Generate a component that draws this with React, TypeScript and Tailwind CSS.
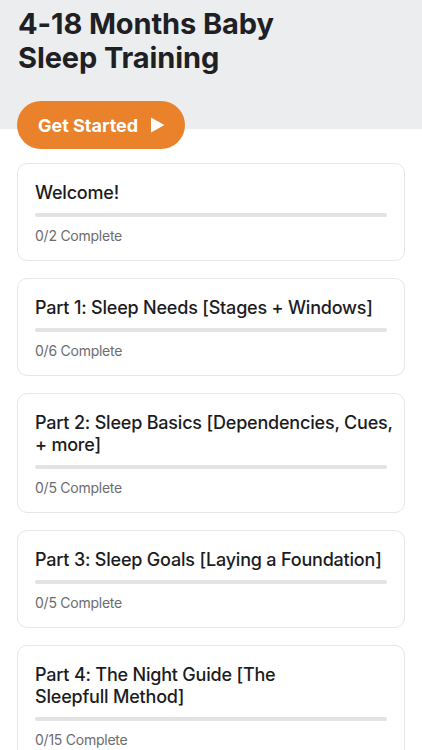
import React from "react";

const parts = [
  { title: "Welcome!", total: 2 },
  { title: "Part 1: Sleep Needs [Stages + Windows]", total: 6 },
  { title: "Part 2: Sleep Basics [Dependencies, Cues, + more]", total: 5 },
  { title: "Part 3: Sleep Goals [Laying a Foundation]", total: 5 },
  { title: "Part 4: The Night Guide [The Sleepfull\u00a0Method]", total: 15 },
];

export default function App() {
  return (
    <div
      className="min-h-[750px] w-[422px] overflow-hidden bg-white"
      style={{ fontFamily: "Inter, 'Noto Sans', sans-serif" }}
    >
      <div className="bg-[#ecedef] px-[18px] pt-[7px] pb-[54px]">
        <h1 className="text-[29px] font-bold leading-[34px] tracking-[-0.1px] text-[#1e2024]">
          4-18 Months Baby
          <br />
          Sleep Training
        </h1>
      </div>
      <div className="px-[17px]">
        <button className="-mt-[28px] flex h-[48px] w-[168px] items-center gap-[12px] rounded-full bg-[#e9822a] pl-[21px] text-[18px] font-bold text-white">
          <span>Get Started</span>
          <svg width="15" height="16" viewBox="0 0 15 16">
            <path d="M1 0.5 L14.5 8 L1 15.5 Z" fill="white" />
          </svg>
        </button>
        <div className="mt-[14px] flex flex-col gap-[17px] pb-6">
          {parts.map((p) => (
            <div
              key={p.title}
              className="rounded-[10px] border border-[#e6e6e8] bg-white pl-[17px] pr-[7px] pt-[18px] pb-[14px]"
            >
              <div className="text-[18px] font-medium leading-[22px] tracking-[-0.2px] text-[#1c1c1e]">
                {p.title}
              </div>
              <div className="mt-[9px] mr-[10px] h-[4px] rounded-full bg-[#e3e3e6]" />
              <div className="mt-[9px] text-[14px] leading-[20px] tracking-[-0.25px] text-[#6c6c71]">
                0/{p.total} Complete
              </div>
            </div>
          ))}
        </div>
      </div>
    </div>
  );
}
